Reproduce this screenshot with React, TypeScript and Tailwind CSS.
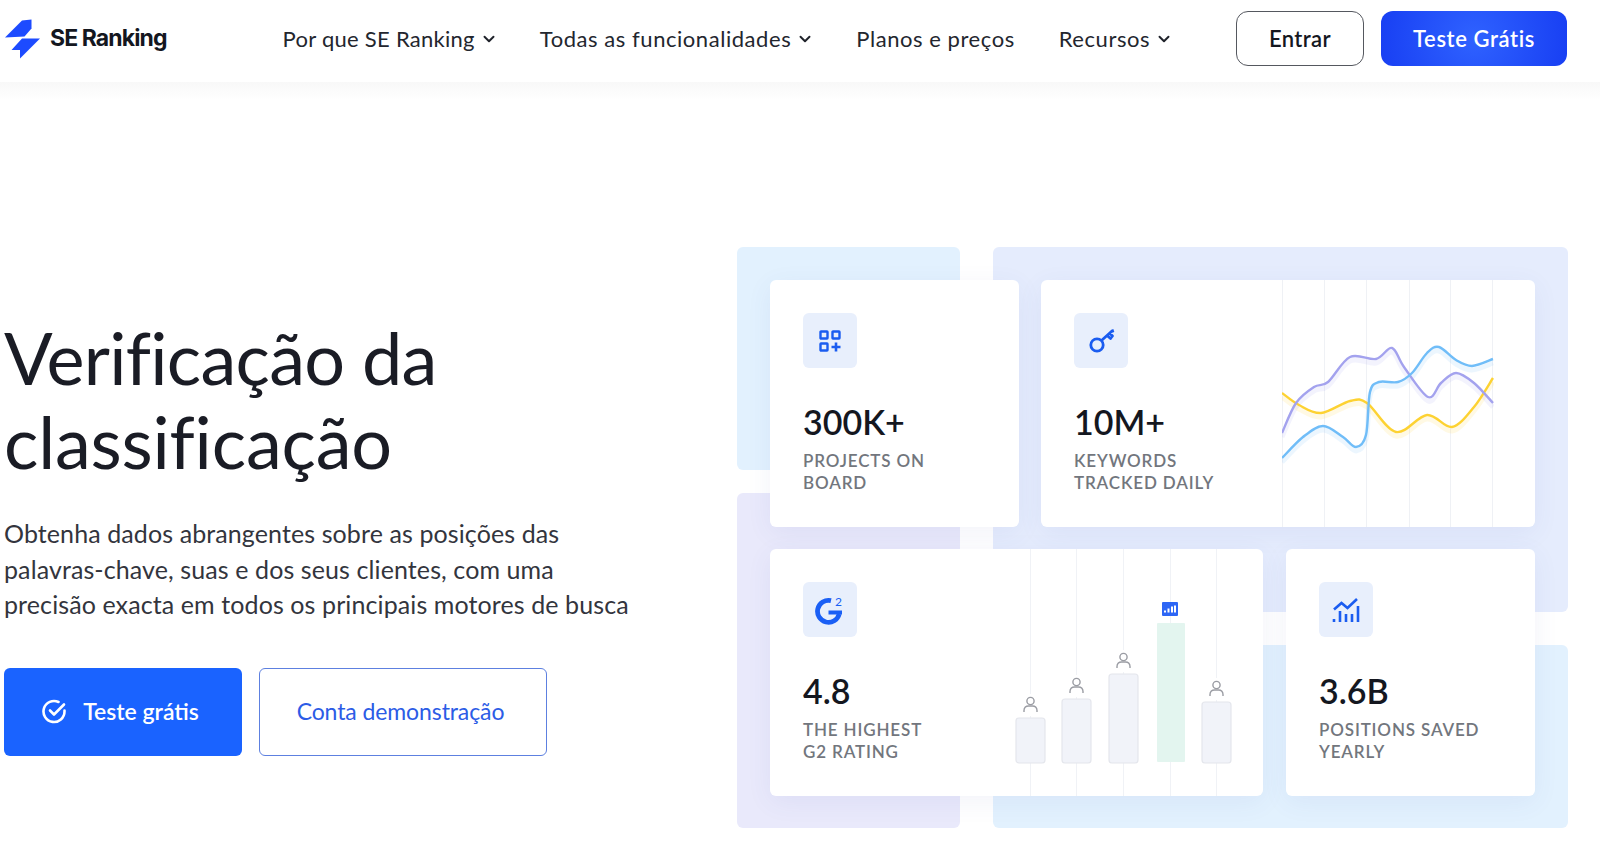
import { ChevronDown } from 'lucide-react';
import type { ReactNode } from 'react';

type Pt = [number, number];

const yellowLine: Pt[] = [[0, 113], [17, 125], [39, 133], [68, 121], [85, 123], [114, 152], [145, 135], [170, 147], [192, 127], [211, 98]];
const blueLine: Pt[] = [[0, 178], [21, 157], [41, 146], [61, 157], [74, 167], [84, 155], [88, 112], [97, 102], [116, 102], [130, 93], [145, 73], [157, 67], [174, 80], [190, 86], [211, 79]];
const purpleLine: Pt[] = [[0, 153], [14, 123], [32, 107], [46, 102], [68, 77], [94, 79], [110, 68], [122, 87], [146, 117], [159, 103], [174, 93], [192, 103], [211, 123]];

const bars = [
  { x: 6, y: 169, h: 45 },
  { x: 52, y: 150, h: 64 },
  { x: 99, y: 125, h: 89 },
  { x: 192, y: 153, h: 61 },
];

// catmull-rom through the points, good enough for the little chart lines
function smooth(p: Pt[]) {
  let d = `M${p[0][0]} ${p[0][1]}`;
  for (let i = 0; i < p.length - 1; i++) {
    const a = p[Math.max(i - 1, 0)];
    const b = p[i];
    const c = p[i + 1];
    const e = p[Math.min(i + 2, p.length - 1)];
    d += ` C${b[0] + (c[0] - a[0]) / 6} ${b[1] + (c[1] - a[1]) / 6} ${c[0] - (e[0] - b[0]) / 6} ${c[1] - (e[1] - b[1]) / 6} ${c[0]} ${c[1]}`;
  }
  return d;
}

function Logo() {
  return (
    <div className="flex items-center">
      <svg width="36" height="40" viewBox="0 0 36 40" className="shrink-0">
        <path d="M0 18.500 17 1.500 26.500 0.500 26.500 9.500 19.500 17.500Z" fill="#1d4bff" />
        <path d="M35 19.500H17L6.500 31H15V39.500Z" fill="#1d4bff" />
      </svg>
      <span className="ml-[9px] text-[23px] font-bold tracking-[-0.9px] text-[#14171f] font-['Inter',sans-serif]">SE Ranking</span>
    </div>
  );
}

function NavItem({ label, menu = true, className = 'tracking-[0.55px]' }: { label: string; menu?: boolean; className?: string }) {
  return (
    <a className={`flex items-center gap-[5px] text-[22px] text-[#23262e] ${className}`}>
      {label}
      {menu && <ChevronDown size={18} strokeWidth={2.6} className="-mr-[2px] text-[#20232b]" />}
    </a>
  );
}

function Stat({ icon, value, label }: { icon: ReactNode; value: string; label: ReactNode }) {
  return (
    <div className="pl-[33px] pt-[33px]">
      <div className="flex h-[55px] w-[54px] items-center justify-center rounded-[6px] bg-[#e8effc]">{icon}</div>
      <div className="mt-[34px] text-[34px] leading-[40px] font-semibold text-[#14171f]">{value}</div>
      <div className="mt-[8px] text-[17px] leading-[22px] font-semibold tracking-[0.85px] text-[#72767d]">{label}</div>
    </div>
  );
}

function GridIcon() {
  return (
    <svg width="22" height="22" viewBox="0 0 22 22" fill="none" stroke="#1a5cf0" strokeWidth="2.400">
      <rect x="1.500" y="1.500" width="7" height="7" rx="0.5" />
      <rect x="13.500" y="1.500" width="7" height="7" rx="0.5" />
      <rect x="1.500" y="13.500" width="7" height="7" rx="0.5" />
      <path d="M17 12.500v9M12.500 17h9" strokeWidth="2.600" />
    </svg>
  );
}

function KeyIcon() {
  return (
    <svg width="27" height="27" viewBox="0 0 27 27" fill="none" stroke="#1a5cf0" strokeWidth="2.800">
      <circle cx="9" cy="18" r="6.200" />
      <path d="M13.500 13.500 24 4M19 8.500l3.500 3 2-2.500-3-3M24 2.500l1 3" strokeLinejoin="round" />
    </svg>
  );
}

function G2Icon() {
  return (
    <svg width="32" height="30" viewBox="0 0 32 30" fill="none">
      <path d="M17 5.600A11 11 0 1 0 25.200 19" stroke="#1a5ff5" strokeWidth="4.800" />
      <path d="M14.500 17.500H28" stroke="#1a5ff5" strokeWidth="3.800" />
      <text x="21" y="11" fontSize="12" fill="#1a5ff5" fontFamily="Lato, sans-serif">2</text>
    </svg>
  );
}

function TrendIcon() {
  return (
    <svg width="28" height="26" viewBox="0 0 28 26" fill="none" stroke="#1a5cf0" strokeWidth="2.600">
      <path d="M2 12.500 9.500 6l6 5L25 2" />
      <path d="M2 25v-3M8 25V14M14 25v-8M20 25v-8M26 25V9" />
    </svg>
  );
}

function Person({ cx, bottom }: { cx: number; bottom: number }) {
  return (
    <g fill="none" stroke="#9a9ca3" strokeWidth="1.400" transform={`translate(${cx} ${bottom})`}>
      <circle cx="0" cy="-11" r="3.600" />
      <path d="M-6.500 0v-1.500c0-3 2-4.500 4.500-4.500h4c2.500 0 4.500 1.500 4.500 4.500V0" />
    </g>
  );
}

function LineChart() {
  const lines = [
    { pts: yellowLine, color: '#fdd232' },
    { pts: purpleLine, color: '#a3a2ee' },
    { pts: blueLine, color: '#70bdf8' },
  ];
  return (
    <svg width="212" height="247" viewBox="0 0 212 247" fill="none" className="ml-auto mr-[41px] shrink-0">
      {[0.5, 42.5, 84.5, 127.5, 168.5, 210.5].map((x) => (
        <path key={x} d={`M${x} 0V247`} stroke="#eff1f5" />
      ))}
      {lines.map((l) => (
        <path key={l.color} d={smooth(l.pts)} transform="translate(0 4)" stroke={l.color} strokeOpacity="0.13" strokeWidth="5" />
      ))}
      {lines.map((l) => (
        <path key={l.color} d={smooth(l.pts)} stroke={l.color} strokeWidth="2.400" />
      ))}
    </svg>
  );
}

function BarChart() {
  return (
    <svg width="230" height="247" viewBox="0 0 230 247" fill="none" className="ml-auto mr-[23px] shrink-0">
      {[20.5, 66.5, 113.5, 160.5, 206.5].map((x) => (
        <path key={x} d={`M${x} 0V247`} stroke="#f0f2f6" />
      ))}
      {bars.map((b) => (
        <g key={b.x}>
          <rect x={b.x} y={b.y} width="29" height={b.h} rx="3" fill="#f1f3f9" stroke="#e4e6ec" strokeWidth="1.200" />
          <rect x={b.x + 3} y={b.y - 24} width="23" height="22" fill="#ffffff" />
          <Person cx={b.x + 14.5} bottom={b.y - 6} />
        </g>
      ))}
      <rect x="147" y="74" width="28" height="139" rx="1" fill="#e3f5ef" />
      <rect x="152" y="53" width="16" height="14" rx="1" fill="#2d66f5" />
      <path d="M155 63.500v-2M158.500 63.500v-4M162 63.500v-6M165 63.500v-7" stroke="#ffffff" strokeWidth="2" />
    </svg>
  );
}

function CheckBadge() {
  return (
    <svg width="25" height="25" viewBox="0 0 25 25" fill="none" stroke="#ffffff" strokeWidth="2.600" strokeLinecap="round" strokeLinejoin="round">
      <path d="M22.500 11.500v1a10.500 10.500 0 1 1-6-9.500" />
      <path d="M8 11.500l4 4 10-10" />
    </svg>
  );
}

const cardClass = 'flex h-[247px] rounded-[6px] bg-white shadow-[0_6px_26px_rgba(70,90,170,0.07)] overflow-hidden';

export default function App() {
  return (
    <div className="h-[857px] w-[1600px] overflow-hidden bg-white font-['Lato',sans-serif]">
      {/* Top nav */}
      <header className="flex h-[82px] items-center pb-[5px] pl-[5px] pr-[33px]">
        <Logo />
        <nav className="ml-[116px] flex items-center gap-[44px]">
          <NavItem label="Por que SE Ranking" className="tracking-[0.27px]" />
          <NavItem label="Todas as funcionalidades" />
          <NavItem label="Planos e preços" menu={false} />
          <NavItem label="Recursos" />
        </nav>
        <div className="ml-auto flex items-center gap-[17px]">
          <button className="h-[55px] w-[128px] rounded-[12px] border border-[#55585f] text-[22px] font-semibold tracking-[0.4px] text-[#14171f]">
            Entrar
          </button>
          <button className="h-[55px] w-[186px] rounded-[12px] bg-[radial-gradient(circle,#2f62ff,#183ff3)] text-[22px] font-semibold tracking-[0.6px] text-white">
            Teste Grátis
          </button>
        </div>
      </header>
      <div className="h-[18px] bg-gradient-to-b from-[#f8f8f8] to-white" />

      {/* Hero */}
      <main className="flex pt-[147px]">
        <div className="w-[737px] shrink-0 pl-[4px] pt-[68px]">
          <h1 className="text-[72px] leading-[84px] font-normal text-[#1a1c25] [font-variant-ligatures:none] tracking-[-0.75px]">
            Verificação da
            <br />
            <span className="tracking-[-0.2px]">classificação</span>
          </h1>
          <p className="mt-[33px] text-[25px] leading-[35.500px] tracking-[0.1px] text-[#33353d]">
            Obtenha dados abrangentes sobre as posições das
            <br />
            palavras-chave, suas e dos seus clientes, com uma
            <br />
            precisão exacta em todos os principais motores de busca
          </p>
          <div className="mt-[45px] flex gap-[17px]">
            <button className="flex h-[88px] w-[238px] items-center justify-center gap-[16px] rounded-[6px] bg-[#1a63ff] pr-[5px] text-[23px] font-semibold text-white">
              <CheckBadge />
              Teste grátis
            </button>
            <button className="h-[88px] w-[288px] rounded-[6px] border border-[#5d80e0] pr-[5px] text-[23px] tracking-[-0.1px] text-[#2c5ce6]">
              Conta demonstração
            </button>
          </div>
        </div>

        {/* Stats collage, the tinted panels sit behind the cards */}
        <div className="relative h-[581px] w-[831px] shrink-0 p-[33px]">
          <div className="absolute left-0 top-0 h-[223px] w-[223px] rounded-[6px] bg-[#e2f1fe]" />
          <div className="absolute left-0 bottom-0 h-[335px] w-[223px] rounded-[6px] bg-[#e9e9fb]" />
          <div className="absolute left-[256px] top-0 h-[365px] w-[575px] rounded-[6px] bg-[#e5ecfd]" />
          <div className="absolute left-[256px] bottom-0 h-[183px] w-[575px] rounded-[6px] bg-[#e2f1fe]" />

          <div className="relative flex flex-col gap-[22px]">
            <div className="flex gap-[22px]">
              <div className={`${cardClass} w-[249px]`}>
                <Stat icon={<GridIcon />} value="300K+" label={<>PROJECTS ON<br />BOARD</>} />
              </div>
              <div className={`${cardClass} flex-1`}>
                <Stat icon={<KeyIcon />} value="10M+" label={<>KEYWORDS<br />TRACKED DAILY</>} />
                <LineChart />
              </div>
            </div>
            <div className="flex gap-[23px]">
              <div className={`${cardClass} flex-1`}>
                <Stat icon={<G2Icon />} value="4.8" label={<>THE HIGHEST<br />G2 RATING</>} />
                <BarChart />
              </div>
              <div className={`${cardClass} w-[249px]`}>
                <Stat icon={<TrendIcon />} value="3.6B" label={<>POSITIONS SAVED<br />YEARLY</>} />
              </div>
            </div>
          </div>
        </div>
      </main>
    </div>
  );
}
